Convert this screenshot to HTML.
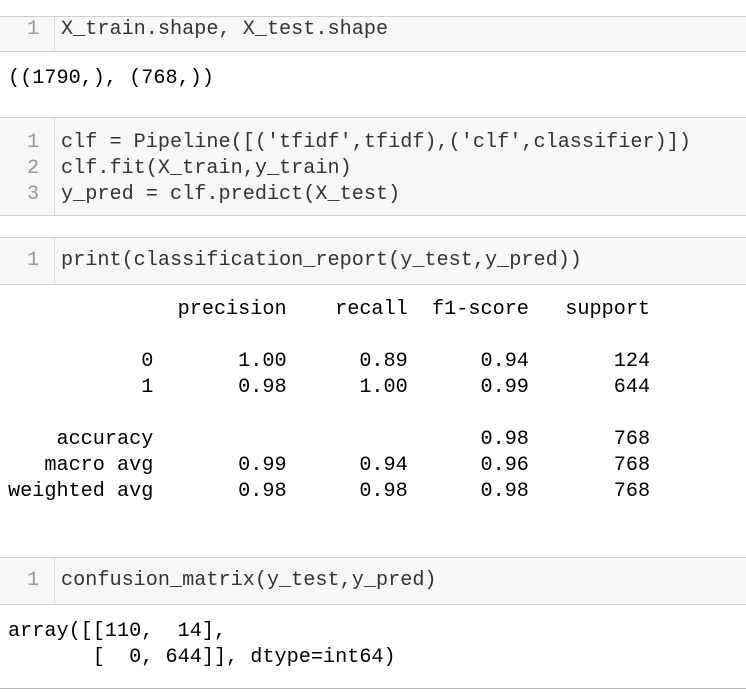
<!DOCTYPE html>
<html><head><style>
body{margin:0;width:746px;height:692px;background:#fff;position:relative;overflow:hidden;font-family:"Liberation Mono",monospace;font-size:20.2px;}
.box{position:absolute;left:0;width:746px;background:#f7f7f7;border-top:1px solid #cfcfcf;border-bottom:1px solid #cfcfcf;box-sizing:border-box}
.gut{position:absolute;left:54px;top:0;bottom:0;border-left:1px solid #ddd}
.t{position:absolute;white-space:pre;line-height:26px;color:#333}
.n{position:absolute;white-space:pre;line-height:26px;color:#999;left:27px}
.o{position:absolute;white-space:pre;line-height:26px;color:#000;left:8px}
.rule{position:absolute;left:0;width:746px;border-top:1px solid #bbb}
</style></head><body>
<div class="box" style="top:16px;height:36px"><div class="gut"></div></div>
<div class="n" style="top:17px">1</div>
<div class="t" style="left:61px;top:17px">X_train.shape, X_test.shape</div>
<div class="o" style="top:66px">((1790,), (768,))</div>

<div class="box" style="top:117px;height:99px"><div class="gut"></div></div>
<div class="n" style="top:130px">1
2
3</div>
<div class="t" style="left:61px;top:130px">clf = Pipeline([('tfidf',tfidf),('clf',classifier)])
clf.fit(X_train,y_train)
y_pred = clf.predict(X_test)</div>

<div class="box" style="top:237px;height:48px"><div class="gut"></div></div>
<div class="n" style="top:248px">1</div>
<div class="t" style="left:61px;top:248px">print(classification_report(y_test,y_pred))</div>
<div class="o" style="top:297px">              precision    recall  f1-score   support

           0       1.00      0.89      0.94       124
           1       0.98      1.00      0.99       644

    accuracy                           0.98       768
   macro avg       0.99      0.94      0.96       768
weighted avg       0.98      0.98      0.98       768</div>

<div class="box" style="top:557px;height:48px"><div class="gut"></div></div>
<div class="n" style="top:568px">1</div>
<div class="t" style="left:61px;top:568px">confusion_matrix(y_test,y_pred)</div>
<div class="o" style="top:619px">array([[110,  14],
       [  0, 644]], dtype=int64)</div>
<div class="rule" style="top:688px"></div>
</body></html>
